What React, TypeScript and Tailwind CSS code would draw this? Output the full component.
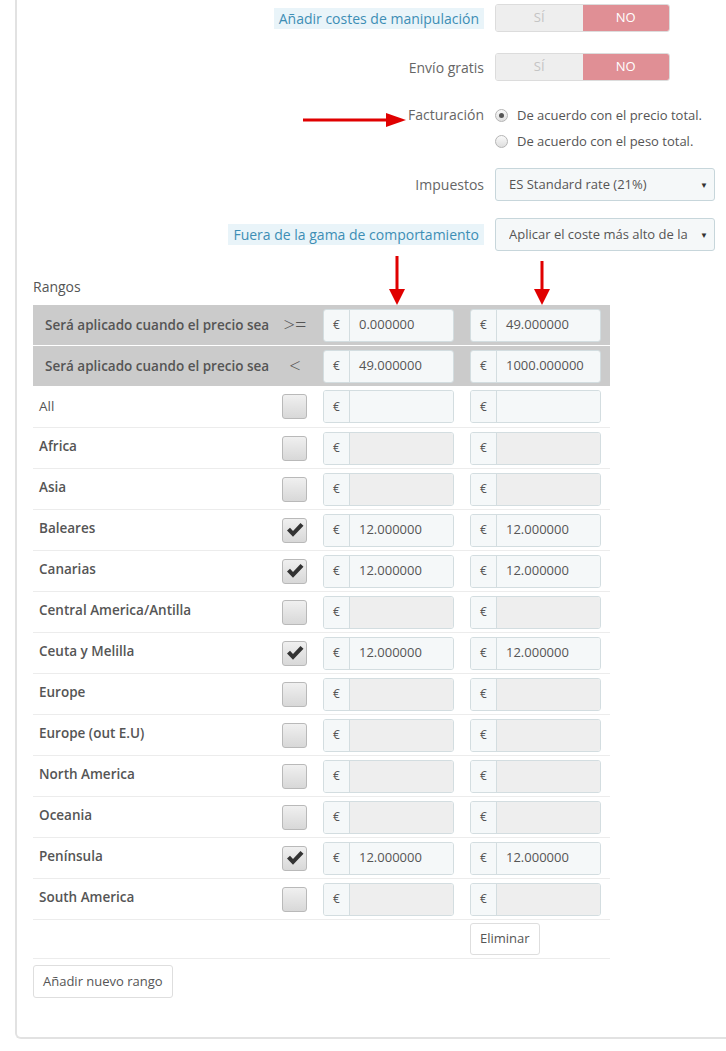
import React from 'react';

const zones = [
    { name: 'All', checked: false, enabled: true, bold: false },
    { name: 'Africa', checked: false, enabled: false, bold: true },
    { name: 'Asia', checked: false, enabled: false, bold: true },
    { name: 'Baleares', checked: true, enabled: true, bold: true },
    { name: 'Canarias', checked: true, enabled: true, bold: true },
    { name: 'Central America/Antilla', checked: false, enabled: false, bold: true },
    { name: 'Ceuta y Melilla', checked: true, enabled: true, bold: true },
    { name: 'Europe', checked: false, enabled: false, bold: true },
    { name: 'Europe (out E.U)', checked: false, enabled: false, bold: true },
    { name: 'North America', checked: false, enabled: false, bold: true },
    { name: 'Oceania', checked: false, enabled: false, bold: true },
    { name: 'Península', checked: true, enabled: true, bold: true },
    { name: 'South America', checked: false, enabled: false, bold: true },
];

function Toggle() {
    return (
        <div className="flex w-[175px] h-[28px] rounded-[3px] overflow-hidden border border-[#dcdcdc]">
            <div className="flex-1 flex items-center justify-center bg-[#eeeeee] text-[#c4c4c4] text-[13px]">SÍ</div>
            <div className="flex-1 flex items-center justify-center bg-[#e08f95] text-white text-[13px]">NO</div>
        </div>
    );
}

function Radio({ checked }: { checked?: boolean }) {
    return (
        <span className="w-[13px] h-[13px] rounded-full border border-[#b5b5b5] bg-gradient-to-b from-[#fafafa] to-[#dedede] flex items-center justify-center shrink-0">
            {checked && <span className="w-[5px] h-[5px] rounded-full bg-[#555]" />}
        </span>
    );
}

function Select({ value }: { value: string }) {
    return (
        <div className="w-[220px] h-[33px] rounded-[3px] border border-[#c7d6db] bg-[#f5f8f9] flex items-center pl-[13px] pr-[6px] text-[13px] text-[#555]">
            <span className="flex-1 whitespace-nowrap overflow-hidden">{value}</span>
            <span className="text-[8px] text-[#333]">▼</span>
        </div>
    );
}

function Money({ value, disabled }: { value?: string; disabled?: boolean }) {
    return (
        <div className="flex w-[131px] h-[33px] rounded-[3px] border border-[#d3dde0] overflow-hidden">
            <div className="w-[26px] flex items-center justify-center bg-[#f5f8f9] border-r border-[#d3dde0] text-[12px] text-[#555]">€</div>
            <div className={`flex-1 flex items-center pl-[9px] text-[13px] text-[#555] ${disabled ? 'bg-[#eeeeee]' : 'bg-[#f5f8f9]'}`}>{value}</div>
        </div>
    );
}

function Check({ checked }: { checked: boolean }) {
    return (
        <div className="w-[25px] h-[25px] rounded-[3px] border border-[#b9b9b9] bg-gradient-to-b from-[#f0f0f0] to-[#d8d8d8] flex items-center justify-center">
            {checked && (
                <svg width="18" height="16" viewBox="0 0 18 16">
                    <path d="M1 8.5 L4 5.8 L7 9 L14.5 1 L17.5 3.8 L7 14.8 Z" fill="#333" />
                </svg>
            )}
        </div>
    );
}

export default function App() {
    return (
        <div className="min-h-screen bg-white font-['Open_Sans',sans-serif] text-[#555] relative">
            {/* red arrows drawn over the form */}
            <svg className="absolute left-[300px] top-[112px]" width="108" height="16" viewBox="0 0 108 16">
                <rect x="3" y="6.5" width="86" height="3" fill="#e00000" />
                <path d="M86 1 L106 8 L86 15 Z" fill="#e00000" />
            </svg>
            <svg className="absolute left-[388px] top-[256px]" width="18" height="50" viewBox="0 0 18 50">
                <rect x="7.5" y="0" width="3" height="36" fill="#e00000" />
                <path d="M1 33 L17 33 L9 49 Z" fill="#e00000" />
            </svg>
            <svg className="absolute left-[533px] top-[261px]" width="18" height="45" viewBox="0 0 18 45">
                <rect x="7.5" y="0" width="3" height="31" fill="#e00000" />
                <path d="M1 28 L17 28 L9 44 Z" fill="#e00000" />
            </svg>

            <div className="ml-[15px] h-[1039px] border-l-2 border-b-2 border-[#e2e2e2] rounded-bl-[6px] pl-[16px] pt-[4px]">
                {/* form rows */}
                <div className="flex items-center">
                    <div className="w-[451px] flex justify-end">
                        <span className="bg-[#e9f4f9] text-[#3d8eb5] text-[14px] px-[5px] leading-[21px]">Añadir costes de manipulación</span>
                    </div>
                    <div className="ml-[11px]"><Toggle /></div>
                </div>
                <div className="flex items-center mt-[21px]">
                    <div className="w-[451px] flex justify-end text-[14px] text-[#666]">Envío gratis</div>
                    <div className="ml-[11px]"><Toggle /></div>
                </div>
                <div className="flex mt-[24px]">
                    <div className="w-[451px] flex justify-end text-[14px] text-[#666] leading-[20px]">Facturación</div>
                    <div className="ml-[11px] flex flex-col gap-[6px] text-[13px] text-[#555]">
                        <label className="flex items-center gap-[9px] leading-[20px]"><Radio checked />De acuerdo con el precio total.</label>
                        <label className="flex items-center gap-[9px] leading-[20px]"><Radio />De acuerdo con el peso total.</label>
                    </div>
                </div>
                <div className="flex items-center mt-[17px]">
                    <div className="w-[451px] flex justify-end text-[14px] text-[#666]">Impuestos</div>
                    <div className="ml-[11px]"><Select value="ES Standard rate (21%)" /></div>
                </div>
                <div className="flex items-center mt-[17px]">
                    <div className="w-[451px] flex justify-end">
                        <span className="bg-[#e9f4f9] text-[#3d8eb5] text-[14px] px-[5px] leading-[21px]">Fuera de la gama de comportamiento</span>
                    </div>
                    <div className="ml-[11px]"><Select value="Aplicar el coste más alto de la" /></div>
                </div>

                <div className="mt-[26px] text-[14px] text-[#555] leading-[20px]">Rangos</div>

                <div className="mt-[8px] w-[577px]">
                    {['>=', '<'].map((op, i) => (
                        <div key={op} className={`flex items-center h-[40px] bg-[#cbcbcb] ${i === 1 ? 'mt-[1px]' : ''}`}>
                            <div className="w-[249px] pl-[12px] text-[13.5px] font-semibold text-[#555] whitespace-nowrap">Será aplicado cuando el precio sea</div>
                            <div className="w-[26px] text-center text-[20px] leading-none font-light text-[#555]">{op}</div>
                            <div className="ml-[15px]"><Money value={i === 0 ? '0.000000' : '49.000000'} /></div>
                            <div className="ml-[16px]"><Money value={i === 0 ? '49.000000' : '1000.000000'} /></div>
                        </div>
                    ))}
                    {zones.map((z, i) => (
                        <div key={z.name} className={`flex items-center h-[41px] ${i > 0 ? 'border-t border-[#ececec]' : ''}`}>
                            <div className={`w-[249px] pl-[6px] text-[13.5px] text-[#555] self-start ${z.bold ? 'font-semibold pt-[8px]' : 'pt-[10px]'}`}>{z.name}</div>
                            <Check checked={z.checked} />
                            <div className="ml-[16px]"><Money value={z.checked ? '12.000000' : ''} disabled={!z.enabled} /></div>
                            <div className="ml-[16px]"><Money value={z.checked ? '12.000000' : ''} disabled={!z.enabled} /></div>
                        </div>
                    ))}
                    <div className="flex items-center h-[40px] border-t border-[#ececec] border-b">
                        <div className="w-[437px]" />
                        <button className="h-[32px] px-[9px] rounded-[3px] border border-[#dedede] bg-white text-[13px] text-[#555]">Eliminar</button>
                    </div>
                </div>
                <button className="mt-[6px] h-[33px] px-[9px] rounded-[3px] border border-[#dedede] bg-white text-[13px] text-[#555]">Añadir nuevo rango</button>
            </div>
        </div>
    );
}
